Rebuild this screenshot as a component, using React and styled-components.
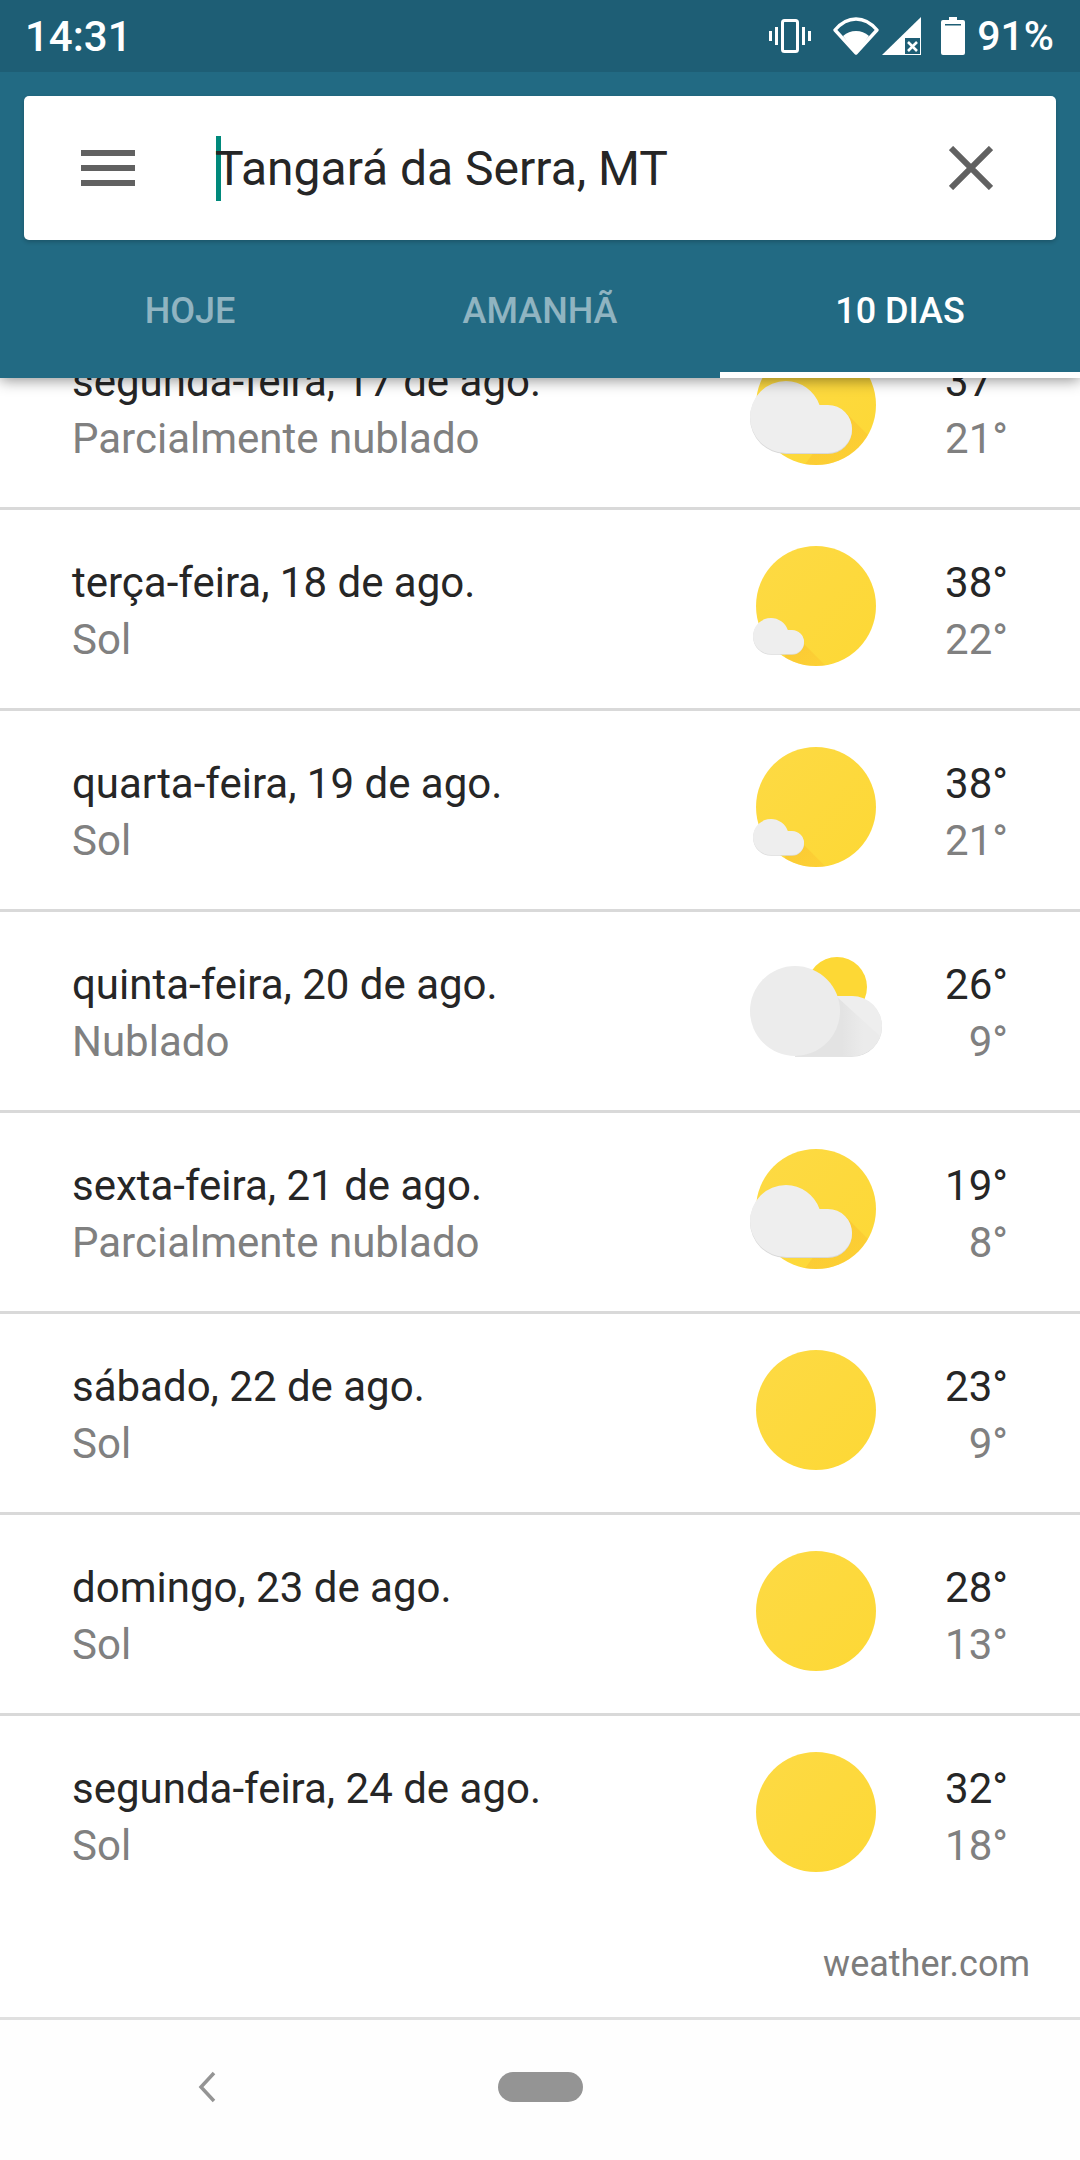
import React from "react";
import styled, { createGlobalStyle } from "styled-components";

const Global = createGlobalStyle`
  html, body { margin: 0; padding: 0; background: #fff; }
  body { font-family: Roboto, "Liberation Sans", sans-serif; }
`;

const Page = styled.div`
  width: 1080px;
  height: 2160px;
  display: flex;
  flex-direction: column;
  overflow: hidden;
  background: #fff;
`;

const Header = styled.header`
  position: relative;
  z-index: 2;
  flex: none;
  background: #226a83;
  box-shadow: 0 2px 14px rgba(0, 0, 0, 0.45);
`;

const StatusBar = styled.div`
  height: 72px;
  box-sizing: border-box;
  padding: 0 26px 0 25px;
  display: flex;
  align-items: center;
  background: #1e5e75;
  color: #fff;
  font-size: 42px;
  font-weight: 500;
`;

const StatusIcons = styled.div`
  margin-left: auto;
  display: flex;
  align-items: center;
`;

const Percent = styled.span`
  margin-left: 12px;
  font-size: 41px;
`;

const SearchCard = styled.div`
  margin: 24px 24px 0;
  height: 144px;
  display: flex;
  align-items: center;
  background: #fff;
  border-radius: 5px;
  box-shadow: 0 2px 4px rgba(0, 0, 0, 0.2);
`;

const MenuIcon = styled.svg`
  margin-left: 57px;
  flex: none;
`;

const Cursor = styled.span`
  flex: none;
  width: 5px;
  height: 65px;
  margin-left: 81px;
  margin-right: -6px;
  background: #00897b;
`;

const Query = styled.span`
  font-size: 48px;
  color: #262626;
`;

const CloseIcon = styled.svg`
  margin-left: auto;
  margin-right: 63px;
  flex: none;
`;

const Tabs = styled.nav`
  margin-top: 24px;
  height: 114px;
  display: grid;
  grid-template-columns: repeat(3, 1fr);
`;

const Tab = styled.div`
  display: flex;
  align-items: center;
  justify-content: center;
  box-sizing: border-box;
  padding-bottom: 14px;
  padding-left: ${(p) => p.$inset || 0}px;
  font-size: 36px;
  font-weight: 500;
  color: ${(p) => (p.$active ? "#fff" : "rgba(255, 255, 255, 0.5)")};
  border-bottom: 6px solid ${(p) => (p.$active ? "#fff" : "transparent")};
`;

const Scroller = styled.main`
  flex: 1;
  min-height: 0;
  overflow: hidden;
`;

const List = styled.div`
  margin-top: -69px;
`;

const Row = styled.div`
  height: 201px;
  box-sizing: border-box;
  padding: 4px 72px 0;
  display: flex;
  align-items: center;
  border-bottom: 3px solid ${(p) => (p.$last ? "transparent" : "#d9d9d9")};
`;

const DayInfo = styled.div`
  flex: 1;
  min-width: 0;
`;

const Primary = styled.div`
  font-size: 42px;
  line-height: 57px;
  color: #262626;
`;

const Secondary = styled.div`
  font-size: 42px;
  line-height: 57px;
  color: #808080;
`;

const WeatherIcon = styled.svg`
  flex: none;
  margin-bottom: 10px;
`;

const Temps = styled.div`
  flex: none;
  width: 120px;
  text-align: right;
`;

const Attribution = styled.div`
  height: 98px;
  box-sizing: border-box;
  padding: 29px 50px 0 0;
  text-align: right;
  font-size: 36px;
  line-height: 36px;
  color: #7c7c7c;
`;

const NavBar = styled.footer`
  flex: none;
  height: 143px;
  box-sizing: border-box;
  border-top: 3px solid #e0e0e0;
  display: grid;
  grid-template-columns: 1fr 1fr 1fr;
  align-items: center;
  background: #fefefe;
  padding-bottom: 6px;
`;

const BackIcon = styled.svg`
  justify-self: start;
  margin-left: 198px;
`;

const HomePill = styled.div`
  justify-self: center;
  width: 85px;
  height: 30px;
  border-radius: 15px;
  background: #949494;
`;

const VibrateIcon = () => (
  <svg width="42" height="34" viewBox="0 0 42 34" style={{ marginRight: 22 }}>
    <rect x="13.5" y="1.5" width="15" height="31" rx="2" fill="none" stroke="#fff" strokeWidth="3" />
    <path d="M6 8h3v18H6zM33 8h3v18h-3zM0 12h3v10H0zM39 12h3v10h-3z" fill="#fff" />
  </svg>
);

const WifiIcon = () => (
  <svg width="46" height="38" viewBox="0 0 46 38" style={{ marginRight: 3 }}>
    <path d="M23 36 2 13C8 6 15 2 23 2s15 4 21 11z" fill="none" stroke="#fff" strokeWidth="3.4" strokeLinejoin="round" />
    <path d="M23 36 10 19c4-3.500 8-5 13-5s9 1.500 13 5z" fill="#fff" />
  </svg>
);

const SignalIcon = () => (
  <svg width="39" height="38" viewBox="0 0 39 38" style={{ marginRight: 20 }}>
    <path d="M0 38 39 0v38z" fill="#fff" />
    <rect x="23" y="21" width="15" height="16" fill="#1e5e75" />
    <path d="M26 25l9 9M35 25l-9 9" stroke="#fff" strokeWidth="2.600" />
  </svg>
);

const BatteryIcon = () => (
  <svg width="24" height="38" viewBox="0 0 24 38">
    <path d="M8 0h8v3h6a2 2 0 0 1 2 2v31a2 2 0 0 1-2 2H2a2 2 0 0 1-2-2V5a2 2 0 0 1 2-2h6z" fill="#fff" />
    <rect x="4" y="7" width="16" height="1.500" fill="#1e5e75" />
  </svg>
);

const CLOUD_BIG = "M42 48a36 36 0 0 1 33.500 24H84a24 24 0 0 1 0 48H42a36 36 0 0 1 0-72z";
const CLOUD_SMALL = "M27 84a18 18 0 0 1 16.800 12H48a12 12 0 0 1 0 24H27a18 18 0 0 1 0-36z";

const SunDisc = ({ id }) => (
  <>
    <defs>
      <linearGradient id={`sun-${id}`} x1="0" y1="0" x2="1" y2="1">
        <stop offset="0" stopColor="#fdda44" />
        <stop offset="1" stopColor="#fdd835" />
      </linearGradient>
      <clipPath id={`clip-${id}`}>
        <circle cx="72" cy="72" r="60" />
      </clipPath>
      <linearGradient id={`shade-${id}`} x1="0" y1="0" x2="1" y2="1">
        <stop offset="0" stopColor="#f9b92c" stopOpacity="0.6" />
        <stop offset="1" stopColor="#fbc02d" stopOpacity="0.15" />
      </linearGradient>
    </defs>
    <circle cx="72" cy="72" r="60" fill={`url(#sun-${id})`} />
  </>
);

const Sunny = ({ id }) => (
  <WeatherIcon width="144" height="144" viewBox="0 0 144 144">
    <SunDisc id={id} />
  </WeatherIcon>
);

const MostlySunny = ({ id }) => (
  <WeatherIcon width="144" height="144" viewBox="0 0 144 144">
    <SunDisc id={id} />
    <path d="M50 100 100 150H30z" fill={`url(#shade-${id})`} clipPath={`url(#clip-${id})`} />
    <path d={CLOUD_SMALL} fill="#dcdcdc" transform="translate(0 0.800)" />
    <path d={CLOUD_SMALL} fill="#eeeeee" />
  </WeatherIcon>
);

const PartlyCloudy = ({ id }) => (
  <WeatherIcon width="144" height="144" viewBox="0 0 144 144">
    <SunDisc id={id} />
    <path d="M100 78 160 138V160H40z" fill={`url(#shade-${id})`} clipPath={`url(#clip-${id})`} />
    <path d={CLOUD_BIG} fill="#d8d8d8" transform="translate(0 1)" />
    <path d={CLOUD_BIG} fill="#eeeeee" />
  </WeatherIcon>
);

const Cloudy = () => (
  <WeatherIcon width="144" height="144" viewBox="0 0 144 144">
    <defs>
      <linearGradient id="cloud-band" x1="0" y1="0" x2="1" y2="0">
        <stop offset="0.55" stopColor="#e3e3e3" />
        <stop offset="0.8" stopColor="#ebebeb" />
      </linearGradient>
    </defs>
    <circle cx="93" cy="51" r="30" fill="#fdd835" />
    <path d="M108 60a30 30 0 0 1 0 60H51V60z" fill="#dcdcdc" transform="translate(0 0.800)" />
    <path d="M108 60a30 30 0 0 1 0 60H51V60z" fill="#eeeeee" />
    <path d="M92 60 136 100a30 30 0 0 1-28 20H51V60z" fill="url(#cloud-band)" />
    <circle cx="51" cy="75" r="45" fill="#ececec" />
  </WeatherIcon>
);

const ICONS = { sun: Sunny, mostly: MostlySunny, partly: PartlyCloudy, cloudy: Cloudy };

const DAYS = [
  { day: "segunda-feira, 17 de ago.", cond: "Parcialmente nublado", icon: "partly", hi: "37°", lo: "21°" },
  { day: "terça-feira, 18 de ago.", cond: "Sol", icon: "mostly", hi: "38°", lo: "22°" },
  { day: "quarta-feira, 19 de ago.", cond: "Sol", icon: "mostly", hi: "38°", lo: "21°" },
  { day: "quinta-feira, 20 de ago.", cond: "Nublado", icon: "cloudy", hi: "26°", lo: "9°" },
  { day: "sexta-feira, 21 de ago.", cond: "Parcialmente nublado", icon: "partly", hi: "19°", lo: "8°" },
  { day: "sábado, 22 de ago.", cond: "Sol", icon: "sun", hi: "23°", lo: "9°" },
  { day: "domingo, 23 de ago.", cond: "Sol", icon: "sun", hi: "28°", lo: "13°" },
  { day: "segunda-feira, 24 de ago.", cond: "Sol", icon: "sun", hi: "32°", lo: "18°" },
];

export default function App() {
  return (
    <Page>
      <Global />
      <Header>
        <StatusBar>
          <span>14:31</span>
          <StatusIcons>
            <VibrateIcon />
            <WifiIcon />
            <SignalIcon />
            <BatteryIcon />
            <Percent>91%</Percent>
          </StatusIcons>
        </StatusBar>
        <SearchCard>
          <MenuIcon width="54" height="36" viewBox="0 0 54 36">
            <path d="M0 0h54v6H0zM0 15h54v6H0zM0 30h54v6H0z" fill="#616161" />
          </MenuIcon>
          <Cursor />
          <Query>Tangará da Serra, MT</Query>
          <CloseIcon width="44" height="44" viewBox="0 0 44 44">
            <path d="M2 2 42 42M42 2 2 42" stroke="#616161" strokeWidth="6" fill="none" />
          </CloseIcon>
        </SearchCard>
        <Tabs>
          <Tab $inset={20}>HOJE</Tab>
          <Tab>AMANHÃ</Tab>
          <Tab $active>10 DIAS</Tab>
        </Tabs>
      </Header>
      <Scroller>
        <List>
          {DAYS.map((d, i) => {
            const Icon = ICONS[d.icon];
            return (
              <Row key={d.day} $last={i === DAYS.length - 1}>
                <DayInfo>
                  <Primary>{d.day}</Primary>
                  <Secondary>{d.cond}</Secondary>
                </DayInfo>
                <Icon id={`i${i}`} />
                <Temps>
                  <Primary>{d.hi}</Primary>
                  <Secondary>{d.lo}</Secondary>
                </Temps>
              </Row>
            );
          })}
          <Attribution>weather.com</Attribution>
        </List>
      </Scroller>
      <NavBar>
        <BackIcon width="18" height="32" viewBox="0 0 18 32">
          <path d="M16 2 3 16l13 14" fill="none" stroke="#949494" strokeWidth="3.500" />
        </BackIcon>
        <HomePill />
      </NavBar>
    </Page>
  );
}
